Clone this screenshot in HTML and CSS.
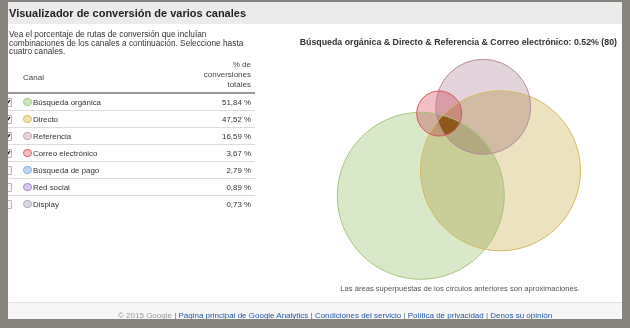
FILE: index.html
```html
<!DOCTYPE html>
<html lang="es">
<head>
<meta charset="utf-8">
<link rel="stylesheet" href="styles.css">
</head>
<body>
<div class="page">
  <div class="header"><h1 class="title">Visualizador de conversión de varios canales</h1></div>
  <div class="main">
    <div class="left">
      <p class="desc">Vea el porcentaje de rutas de conversión que incluían<br>combinaciones de los canales a continuación. Seleccione hasta<br>cuatro canales.</p>
      <div class="thead">
        <span class="th-canal">Canal</span>
        <span class="th-pct">% de<br>conversiones<br>totales</span>
      </div>
      <div class="row">
        <span class="cb on"><svg viewBox="0 0 9 9"><path d="M1.5 4.5 L3.6 6.8 L7.8 1.5" /></svg></span>
        <span class="dot c-green"></span><span class="name">Búsqueda orgánica</span><span class="pct">51,84 %</span>
      </div>
      <div class="row">
        <span class="cb on"><svg viewBox="0 0 9 9"><path d="M1.5 4.5 L3.6 6.8 L7.8 1.5" /></svg></span>
        <span class="dot c-yellow"></span><span class="name">Directo</span><span class="pct">47,52 %</span>
      </div>
      <div class="row">
        <span class="cb on"><svg viewBox="0 0 9 9"><path d="M1.5 4.5 L3.6 6.8 L7.8 1.5" /></svg></span>
        <span class="dot c-mauve"></span><span class="name">Referencia</span><span class="pct">16,59 %</span>
      </div>
      <div class="row">
        <span class="cb on"><svg viewBox="0 0 9 9"><path d="M1.5 4.5 L3.6 6.8 L7.8 1.5" /></svg></span>
        <span class="dot c-red"></span><span class="name">Correo electrónico</span><span class="pct">3,67 %</span>
      </div>
      <div class="row">
        <span class="cb"></span>
        <span class="dot c-blue"></span><span class="name">Búsqueda de pago</span><span class="pct">2,79 %</span>
      </div>
      <div class="row">
        <span class="cb"></span>
        <span class="dot c-purple"></span><span class="name">Red social</span><span class="pct">0,89 %</span>
      </div>
      <div class="row last">
        <span class="cb"></span>
        <span class="dot c-grey"></span><span class="name">Display</span><span class="pct">0,73 %</span>
      </div>
    </div>
    <div class="right">
      <div class="venn-title">Búsqueda orgánica &amp; Directo &amp; Referencia &amp; Correo electrónico: 0.52% (80)</div>
      <div class="venn">
        <svg class="venn-svg" width="260" height="230" viewBox="0 0 260 230">
          <defs>
            <clipPath id="clipRed"><circle cx="109.2" cy="58.5" r="22.5"/></clipPath>
            <clipPath id="clipMauve"><circle cx="153.2" cy="51.8" r="47.5"/></clipPath>
            <clipPath id="clipYellow"><circle cx="170.5" cy="115.8" r="80"/></clipPath>
          </defs>
          <g class="fills">
            <circle class="f-green" cx="90.8" cy="140.8" r="83.5"/>
            <circle class="f-yellow" cx="170.5" cy="115.8" r="80"/>
            <circle class="f-mauve" cx="153.2" cy="51.8" r="47.5"/>
            <circle class="f-red" cx="109.2" cy="58.5" r="22.5"/>
          </g>
          <g clip-path="url(#clipRed)"><g clip-path="url(#clipMauve)"><g clip-path="url(#clipYellow)">
            <circle class="f-core" cx="90.8" cy="140.8" r="83.5"/>
          </g></g></g>
          <g class="strokes">
            <circle class="s-green" cx="90.8" cy="140.8" r="83.5"/>
            <circle class="s-yellow" cx="170.5" cy="115.8" r="80"/>
            <circle class="s-mauve" cx="153.2" cy="51.8" r="47.5"/>
            <circle class="s-red" cx="109.2" cy="58.5" r="22.5"/>
          </g>
        </svg>
        <div class="caption">Las áreas superpuestas de los círculos anteriores son aproximaciones.</div>
      </div>
    </div>
  </div>
  <div class="footer">
    <span class="copy">© 2015 Google</span> <span class="sep">|</span> <a href="#">Página principal de Google Analytics</a> <span class="sep">|</span> <a href="#">Condiciones del servicio</a> <span class="sep">|</span> <a href="#">Política de privacidad</a> <span class="sep">|</span> <a href="#">Denos su opinión</a>
  </div>
</div>
</body>
</html>
```

FILE: styles.css
```css
html, body {
  margin: 0;
  padding: 0;
}
body {
  background: #86837e;
  font-family: "Liberation Sans", Arial, sans-serif;
  color: #333;
  width: 630px;
  height: 328px;
  overflow: hidden;
}
.page {
  margin: 2px 8px 0 8px;
  width: 614px;
  height: 317px;
  background: #fff;
  overflow: hidden;
  display: flex;
  flex-direction: column;
}
.header {
  height: 22px;
  background: #ebebeb;
  display: flex;
  align-items: center;
  flex-shrink: 0;
}
.title {
  margin: 0 0 0 1px;
  font-size: 11px;
  font-weight: bold;
  color: #222;
  line-height: 22px;
}
.main {
  display: flex;
  height: 278px;
  flex-shrink: 0;
}
.left {
  width: 247px;
  flex-shrink: 0;
}
.desc {
  margin: 0;
  padding: 6px 0 0 1px;
  font-size: 8.3px;
  line-height: 8.7px;
  color: #333;
  white-space: nowrap;
}
.thead {
  display: flex;
  align-items: center;
  margin-top: 4px;
  border-bottom: 2px solid #999;
  padding-bottom: 2px;
}
.th-canal {
  padding-left: 15px;
  padding-top: 4px;
  font-size: 8px;
  color: #444;
}
.th-pct {
  margin-left: auto;
  padding-right: 4px;
  text-align: right;
  font-size: 8px;
  line-height: 10px;
  color: #444;
}
.row {
  display: flex;
  align-items: center;
  height: 16px;
  border-bottom: 1px solid #dcdcdc;
  font-size: 7.9px;
  color: #333;
}
.row.last {
  border-bottom: none;
}
.cb {
  width: 7px;
  height: 7px;
  margin-left: -5px;
  border: 1px solid #b5b5b5;
  border-radius: 1px;
  background: #f6f6f6;
  flex-shrink: 0;
  display: flex;
}
.cb svg {
  width: 7px;
  height: 7px;
}
.cb svg path {
  fill: none;
  stroke: #111;
  stroke-width: 1.6;
}
.dot {
  width: 6.6px;
  height: 6.6px;
  border-radius: 50%;
  border: 0.7px solid;
  margin-left: 11px;
  margin-right: 1.4px;
  flex-shrink: 0;
}
.c-green { background: #cfe6bf; border-color: #a4cc88; }
.c-yellow { background: #f1e0ab; border-color: #dcc06a; }
.c-mauve { background: #e9d5dd; border-color: #c4a2b1; }
.c-red { background: #f6bcc2; border-color: #e06873; }
.c-blue { background: #c0d6f6; border-color: #8db1e6; }
.c-purple { background: #d6c8ef; border-color: #a690d6; }
.c-grey { background: #d6d8de; border-color: #a9aeb7; }
.pct {
  margin-left: auto;
  padding-right: 4px;
}
.right {
  flex: 1;
  display: flex;
  flex-direction: column;
}
.venn-title {
  text-align: right;
  padding: 13px 5px 0 0;
  font-size: 8.8px;
  line-height: 10px;
  font-weight: bold;
  color: #333;
}
.venn {
  margin: 8px 0 0 75px;
  width: 260px;
}
.venn-svg {
  display: block;
}
.fills circle {
  mix-blend-mode: multiply;
}
.f-green { fill: #d9e8c9; }
.f-yellow { fill: #ece2c0; }
.f-mauve { fill: #e3d3da; }
.f-red { fill: #f4bec4; }
.f-core { fill: #8d5819; }
.strokes circle {
  fill: none;
  stroke-width: 1;
}
.s-green { stroke: #a8c57e; }
.s-yellow { stroke: #d3bb64; }
.s-mauve { stroke: #b3909e; }
.s-red { stroke: #d9535e; }
.caption {
  text-align: center;
  font-size: 7.6px;
  line-height: 8px;
  color: #555;
}
.footer {
  flex: 1;
  border-top: 1px solid #e2e2e2;
  background: #f6f6f6;
  padding: 8px 0 0 110px;
  font-size: 8px;
  line-height: 9px;
  white-space: nowrap;
  color: #999;
}
.footer a {
  color: #2457a8;
  text-decoration: underline;
}
.copy {
  color: #999;
}
.sep {
  color: #666;
}
```
